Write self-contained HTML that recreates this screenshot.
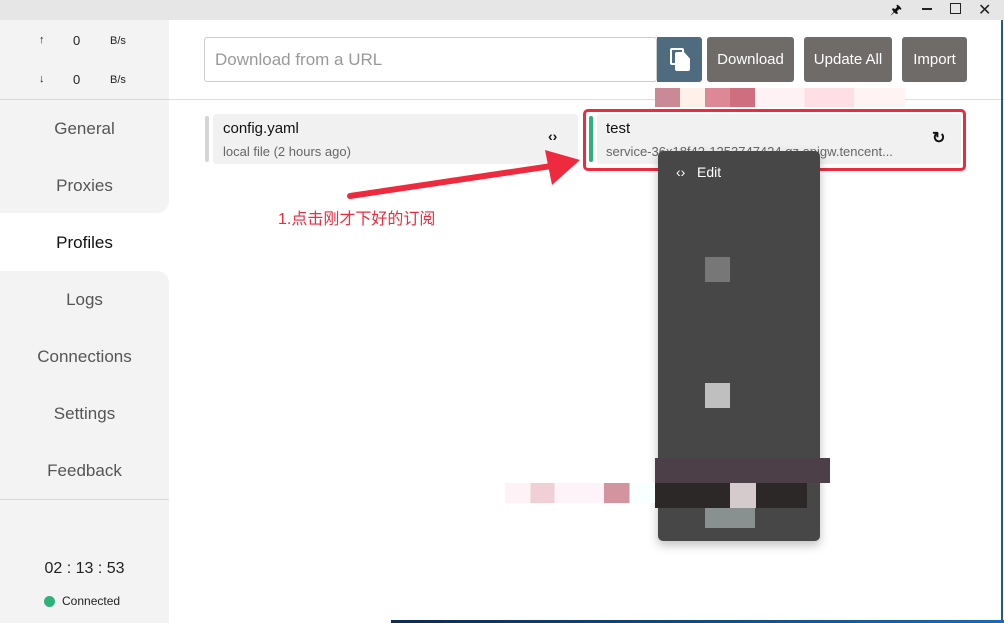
<!DOCTYPE html>
<html><head><meta charset="utf-8"><style>
*{box-sizing:border-box;margin:0;padding:0}
body{width:1004px;height:623px;overflow:hidden;background:#fff;font-family:"Liberation Sans","Noto Sans CJK SC",sans-serif;position:relative}
.a{position:absolute}
.nav{position:absolute;left:0;width:169px;text-align:center;font-size:17px;color:#555}
</style></head><body>
<div class="a" style="left:0;top:0;width:1004px;height:20px;background:#e6e6e6"></div>
<div class="a" style="left:890px;top:1px;font-size:13px;color:#111">&#x1F588;</div>
<div class="a" style="left:922px;top:8px;width:10px;height:2px;background:#222"></div>
<div class="a" style="left:950px;top:3px;width:11px;height:11px;border:1.5px solid #222"></div>
<div class="a" style="left:978px;top:0px;font-size:16px;color:#222">✕</div>
<div class="a" style="left:0;top:20px;width:169px;height:193px;background:#f3f3f3;border-bottom-right-radius:12px"></div>
<div class="a" style="left:0;top:271px;width:169px;height:352px;background:#f3f3f3;border-top-right-radius:12px"></div>
<div class="a" style="left:0;top:99px;width:1004px;height:1px;background:#ddd"></div>
<div class="a" style="left:0;top:99px;width:169px;height:1px;background:#d8d8d8"></div>
<div class="a" style="left:39px;top:34px;font-size:11px;color:#222">↑</div>
<div class="a" style="left:73px;top:33px;font-size:13px;color:#222">0</div>
<div class="a" style="left:110px;top:35px;font-size:11px;color:#222">B/s</div>
<div class="a" style="left:39px;top:73px;font-size:11px;color:#222">↓</div>
<div class="a" style="left:73px;top:72px;font-size:13px;color:#222">0</div>
<div class="a" style="left:110px;top:74px;font-size:11px;color:#222">B/s</div>
<div class="nav" style="top:119px">General</div>
<div class="nav" style="top:176px">Proxies</div>
<div class="nav" style="top:233px;color:#111">Profiles</div>
<div class="nav" style="top:290px">Logs</div>
<div class="nav" style="top:347px">Connections</div>
<div class="nav" style="top:404px">Settings</div>
<div class="nav" style="top:461px">Feedback</div>
<div class="a" style="left:0;top:499px;width:169px;height:1px;background:#d8d8d8"></div>
<div class="a" style="left:0;top:560px;width:169px;text-align:center;font-size:16px;color:#222">02 : 13 : 53</div>
<div class="a" style="left:44px;top:596px;width:11px;height:11px;border-radius:50%;background:#2db37a"></div>
<div class="a" style="left:62px;top:594px;font-size:12px;color:#222">Connected</div>

<div class="a" style="left:204px;top:37px;width:453px;height:45px;border:1px solid #ccc;border-radius:3px;font-size:17px;color:#999;padding:12px 10px">Download from a URL</div>
<div class="a" style="left:657px;top:37px;width:45px;height:45px;background:#4f6b80;border-radius:0 3px 3px 0"></div>
<div class="a" style="left:670px;top:48px;width:14px;height:17px;border:2.5px solid #fff;border-radius:2px"></div>
<div class="a" style="left:675px;top:52px;width:15px;height:19px;background:#fff;border-radius:2px;clip-path:polygon(0 0,60% 0,100% 35%,100% 100%,0 100%)"></div>
<div class="a" style="left:707px;top:37px;width:87px;height:45px;background:#6f6b69;border-radius:3px;color:#fff;font-size:15px;text-align:center;line-height:45px">Download</div>
<div class="a" style="left:804px;top:37px;width:88px;height:45px;background:#6f6b69;border-radius:3px;color:#fff;font-size:15px;text-align:center;line-height:45px">Update All</div>
<div class="a" style="left:902px;top:37px;width:65px;height:45px;background:#6f6b69;border-radius:3px;color:#fff;font-size:15px;text-align:center;line-height:45px">Import</div>

<div class="a" style="left:205px;top:116px;width:4px;height:46px;background:#d5d5d5;border-radius:2px"></div>
<div class="a" style="left:213px;top:114px;width:365px;height:50px;background:#f1f1f1;border-radius:3px"></div>
<div class="a" style="left:223px;top:120px;font-size:15px;color:#111">config.yaml</div>
<div class="a" style="left:223px;top:144px;font-size:13px;color:#666">local file (2 hours ago)</div>
<div class="a" style="left:548px;top:128px;font-size:14px;font-weight:bold;color:#111">‹›</div>

<div class="a" style="left:583px;top:109px;width:383px;height:62px;border:3px solid #ee2a3e;border-radius:5px"></div>
<div class="a" style="left:589px;top:116px;width:4px;height:46px;background:#2db37a;border-radius:2px"></div>
<div class="a" style="left:597px;top:114px;width:364px;height:50px;background:#f1f1f1;border-radius:3px"></div>
<div class="a" style="left:606px;top:120px;font-size:15px;color:#111">test</div>
<div class="a" style="left:606px;top:144px;font-size:13px;color:#666;white-space:nowrap">service-36x18f42-1253747424.gz.apigw.tencent...</div>
<div class="a" style="left:932px;top:128px;font-size:16px;font-weight:bold;color:#111">↻</div>

<div class="a" style="left:655px;top:88px;width:100px;height:19px;background:linear-gradient(90deg,#c98a95 0 25%,#fff1ea 25% 50%,#dd8896 50% 75%,#cf6e7f 75%)"></div>
<div class="a" style="left:755px;top:88px;width:150px;height:19px;background:linear-gradient(90deg,#fff2f5 0 33%,#ffdfe5 33% 66%,#fff3f3 66%)"></div>
<div class="a" style="left:658px;top:151px;width:162px;height:390px;background:#474747;border-radius:5px;box-shadow:0 4px 10px rgba(0,0,0,.25)"></div>
<div class="a" style="left:676px;top:164px;color:#fff;font-size:14px">‹› &nbsp;&nbsp;Edit</div>
<div class="a" style="left:705px;top:257px;width:25px;height:25px;background:#777"></div>
<div class="a" style="left:705px;top:383px;width:25px;height:25px;background:#bfbfbf"></div>
<div class="a" style="left:655px;top:458px;width:175px;height:25px;background:#4d3f48"></div>
<div class="a" style="left:655px;top:483px;width:152px;height:25px;background:#2d2828"></div>
<div class="a" style="left:730px;top:483px;width:26px;height:25px;background:#d6cbcc"></div>
<div class="a" style="left:505px;top:483px;width:150px;height:20px;background:linear-gradient(90deg,#fff2f6 0 17%,#f0d0d6 17% 33%,#fff3fa 33% 66%,#d4949f 66% 83%,#f8ffff 83%)"></div>
<div class="a" style="left:705px;top:508px;width:50px;height:20px;background:#889090"></div>

<svg class="a" style="left:340px;top:150px" width="250" height="50"><line x1="10" y1="46" x2="225" y2="14" stroke="#ee2a3e" stroke-width="6" stroke-linecap="round"/><polygon points="240,10 205,0 212,35" fill="#ee2a3e"/></svg>
<div class="a" style="left:278px;top:205px;font-size:16px;color:#ee2a3e">1.点击刚才下好的订阅</div>

<div class="a" style="left:1001px;top:20px;width:2px;height:603px;background:#1a5c9a"></div>
<div class="a" style="left:391px;top:620px;width:613px;height:3px;background:linear-gradient(90deg,#0d2c50,#1a6ab5)"></div>
</body></html>
